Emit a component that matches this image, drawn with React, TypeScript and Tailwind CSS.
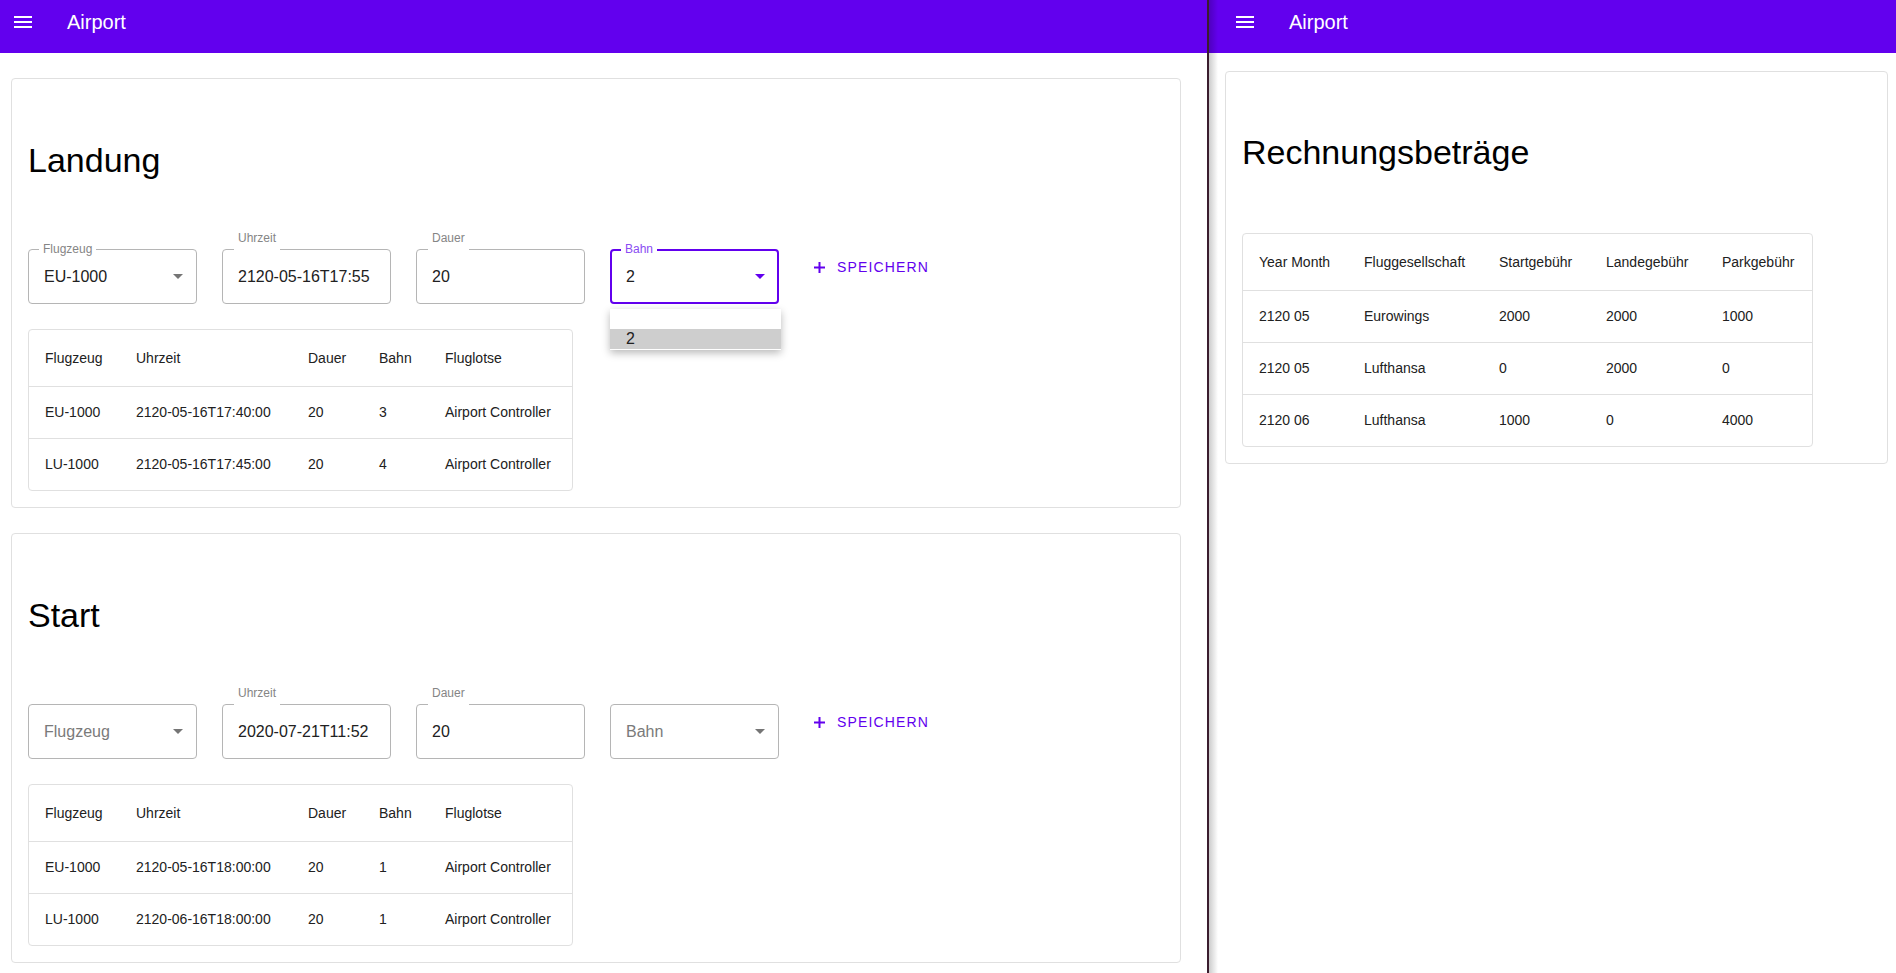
import React from "react";

// Zwei Fenster nebeneinander: links Landung/Start, rechts Rechnungsbeträge

const landungRows = [
  ["EU-1000", "2120-05-16T17:40:00", "20", "3", "Airport Controller"],
  ["LU-1000", "2120-05-16T17:45:00", "20", "4", "Airport Controller"],
];

const startRows = [
  ["EU-1000", "2120-05-16T18:00:00", "20", "1", "Airport Controller"],
  ["LU-1000", "2120-06-16T18:00:00", "20", "1", "Airport Controller"],
];

const billRows = [
  ["2120 05", "Eurowings", "2000", "2000", "1000"],
  ["2120 05", "Lufthansa", "0", "2000", "0"],
  ["2120 06", "Lufthansa", "1000", "0", "4000"],
];

const flightHead = ["Flugzeug", "Uhrzeit", "Dauer", "Bahn", "Fluglotse"];
const billHead = ["Year Month", "Fluggesellschaft", "Startgebühr", "Landegebühr", "Parkgebühr"];

function MenuIcon() {
  return (
    <svg width="24" height="24" viewBox="0 0 24 24" fill="white">
      <path d="M3 18h18v-2H3v2zm0-5h18v-2H3v2zm0-7v2h18V6H3z" />
    </svg>
  );
}

function AppBar({ pad }: { pad: string }) {
  return (
    <div className="h-[53px] w-full shrink-0 bg-[#6200ee] text-white">
      <div className={`flex h-[44px] items-center ${pad}`}>
        <MenuIcon />
        <span className="ml-[32px] text-[20px] leading-[24px]">Airport</span>
      </div>
    </div>
  );
}

function Arrow({ color }: { color: string }) {
  return (
    <svg width="10" height="5" viewBox="0 0 10 5" className={color}>
      <path d="M0 0l5 5 5-5z" fill="currentColor" />
    </svg>
  );
}

type FieldProps = {
  label: string;
  value?: string;
  select?: boolean;
  focused?: boolean;
  labelMode: "notch" | "above" | "none";
  menu?: boolean;
};

function Field({ label, value, select, focused, labelMode, menu }: FieldProps) {
  const box = focused
    ? "border-2 border-[#6200ee] pl-[14px] pr-[12px]"
    : "border border-[#b5b5b5] pl-[15px] pr-[13px]";
  return (
    <div className={`relative flex h-[55px] w-[169px] shrink-0 items-center justify-between rounded ${box}`}>
      {labelMode === "notch" && (
        <span
          className={`absolute bg-white px-1 text-[12px] leading-[14px] ${
            focused ? "-top-[9px] left-[9px] text-[#8a4cf3]" : "-top-[8px] left-[10px] text-[#858585]"
          }`}
        >
          {label}
        </span>
      )}
      {labelMode === "above" && (
        <div className="absolute -top-[19px] left-[11px] flex flex-col">
          <span className="px-1 text-[12px] leading-[14px] text-[#858585]">{label}</span>
          <div className="mt-[4px] h-[1px] w-full bg-white" />
        </div>
      )}
      {value ? (
        <span className="text-[16px] leading-[19px] text-[#212121]">{value}</span>
      ) : (
        <span className="text-[16px] leading-[19px] text-[#7a7a7a]">{label}</span>
      )}
      {select && <Arrow color={focused ? "text-[#6200ee]" : "text-[#757575]"} />}
      {menu && (
        <div className="absolute -left-[2px] top-[58px] z-10 w-[171px] bg-white pb-[1px] shadow-[0_3px_8px_rgba(0,0,0,0.28)]">
          <div className="h-[20px]" />
          <div className="flex h-[20px] items-center bg-[#cecece] pl-[16px] text-[16px] text-[#212121]">2</div>
        </div>
      )}
    </div>
  );
}

function SaveButton() {
  return (
    <div className="ml-[10px] flex h-[36px] items-center gap-[12px] text-[#6200ee]">
      <svg width="11" height="11" viewBox="0 0 11 11" fill="currentColor">
        <rect x="4.5" y="0" width="2" height="11" />
        <rect x="0" y="4.5" width="11" height="2" />
      </svg>
      <span className="text-[14px] uppercase tracking-[1.15px]">Speichern</span>
    </div>
  );
}

function DataTable({ head, rows, cols }: { head: string[]; rows: string[][]; cols: string }) {
  return (
    <div className="w-fit rounded border border-[#e0e0e0] text-[14px] text-[#212121]">
      <div className={`grid h-[57px] items-center border-b border-[#e0e0e0] ${cols}`}>
        {head.map((h) => (
          <div key={h} className="pl-4">
            {h}
          </div>
        ))}
      </div>
      {rows.map((r, i) => (
        <div
          key={i}
          className={`grid items-center ${cols} ${
            i < rows.length - 1 ? "h-[52px] border-b border-[#e0e0e0]" : "h-[51px]"
          }`}
        >
          {r.map((c, j) => (
            <div key={j} className="whitespace-nowrap pl-4">
              {c}
            </div>
          ))}
        </div>
      ))}
    </div>
  );
}

function FlightCard({
  title,
  rows,
  first,
  second,
  bahn,
}: {
  title: string;
  rows: string[][];
  first: FieldProps;
  second: string;
  bahn: FieldProps;
}) {
  return (
    <div className="rounded border border-[#e0e0e0] px-4 pb-4 pt-[60px]">
      <h2 className="text-[34px] leading-[42px] text-black">{title}</h2>
      <div className="mt-[68px] flex items-start gap-[25px]">
        <Field {...first} />
        <Field label="Uhrzeit" value={second} labelMode="above" />
        <Field label="Dauer" value="20" labelMode="above" />
        <Field {...bahn} />
        <SaveButton />
      </div>
      <div className="mt-[25px]">
        <DataTable head={flightHead} rows={rows} cols="grid-cols-[91px_172px_71px_66px_143px]" />
      </div>
    </div>
  );
}

export default function App() {
  return (
    <div className="flex h-[973px] w-[1896px] overflow-hidden bg-white font-['Liberation_Sans',Arial,sans-serif]">
      {/* linkes Fenster */}
      <div className="flex w-[1207px] shrink-0 flex-col">
        <AppBar pad="pl-[11px]" />
        <div className="flex flex-col gap-[25px] pl-[11px] pr-[26px] pt-[25px]">
          <FlightCard
            title="Landung"
            rows={landungRows}
            first={{ label: "Flugzeug", value: "EU-1000", select: true, labelMode: "notch" }}
            second="2120-05-16T17:55"
            bahn={{ label: "Bahn", value: "2", select: true, focused: true, labelMode: "notch", menu: true }}
          />
          <FlightCard
            title="Start"
            rows={startRows}
            first={{ label: "Flugzeug", select: true, labelMode: "none" }}
            second="2020-07-21T11:52"
            bahn={{ label: "Bahn", select: true, labelMode: "none" }}
          />
        </div>
      </div>

      <div className="w-[2px] shrink-0 bg-[#3a1d2e]" />

      {/* rechtes Fenster */}
      <div className="relative flex flex-1 flex-col">
        <div className="pointer-events-none absolute left-0 top-0 h-full w-[9px] bg-gradient-to-r from-black/20 to-transparent" />
        <AppBar pad="pl-[24px]" />
        <div className="pl-[16px] pr-[8px] pt-[18px]">
          <div className="rounded border border-[#e0e0e0] px-4 pb-4 pt-[59px]">
            <h2 className="text-[34px] leading-[42px] text-black">Rechnungsbeträge</h2>
            <div className="mt-[60px]">
              <DataTable head={billHead} rows={billRows} cols="grid-cols-[105px_135px_107px_116px_106px]" />
            </div>
          </div>
        </div>
      </div>
    </div>
  );
}
